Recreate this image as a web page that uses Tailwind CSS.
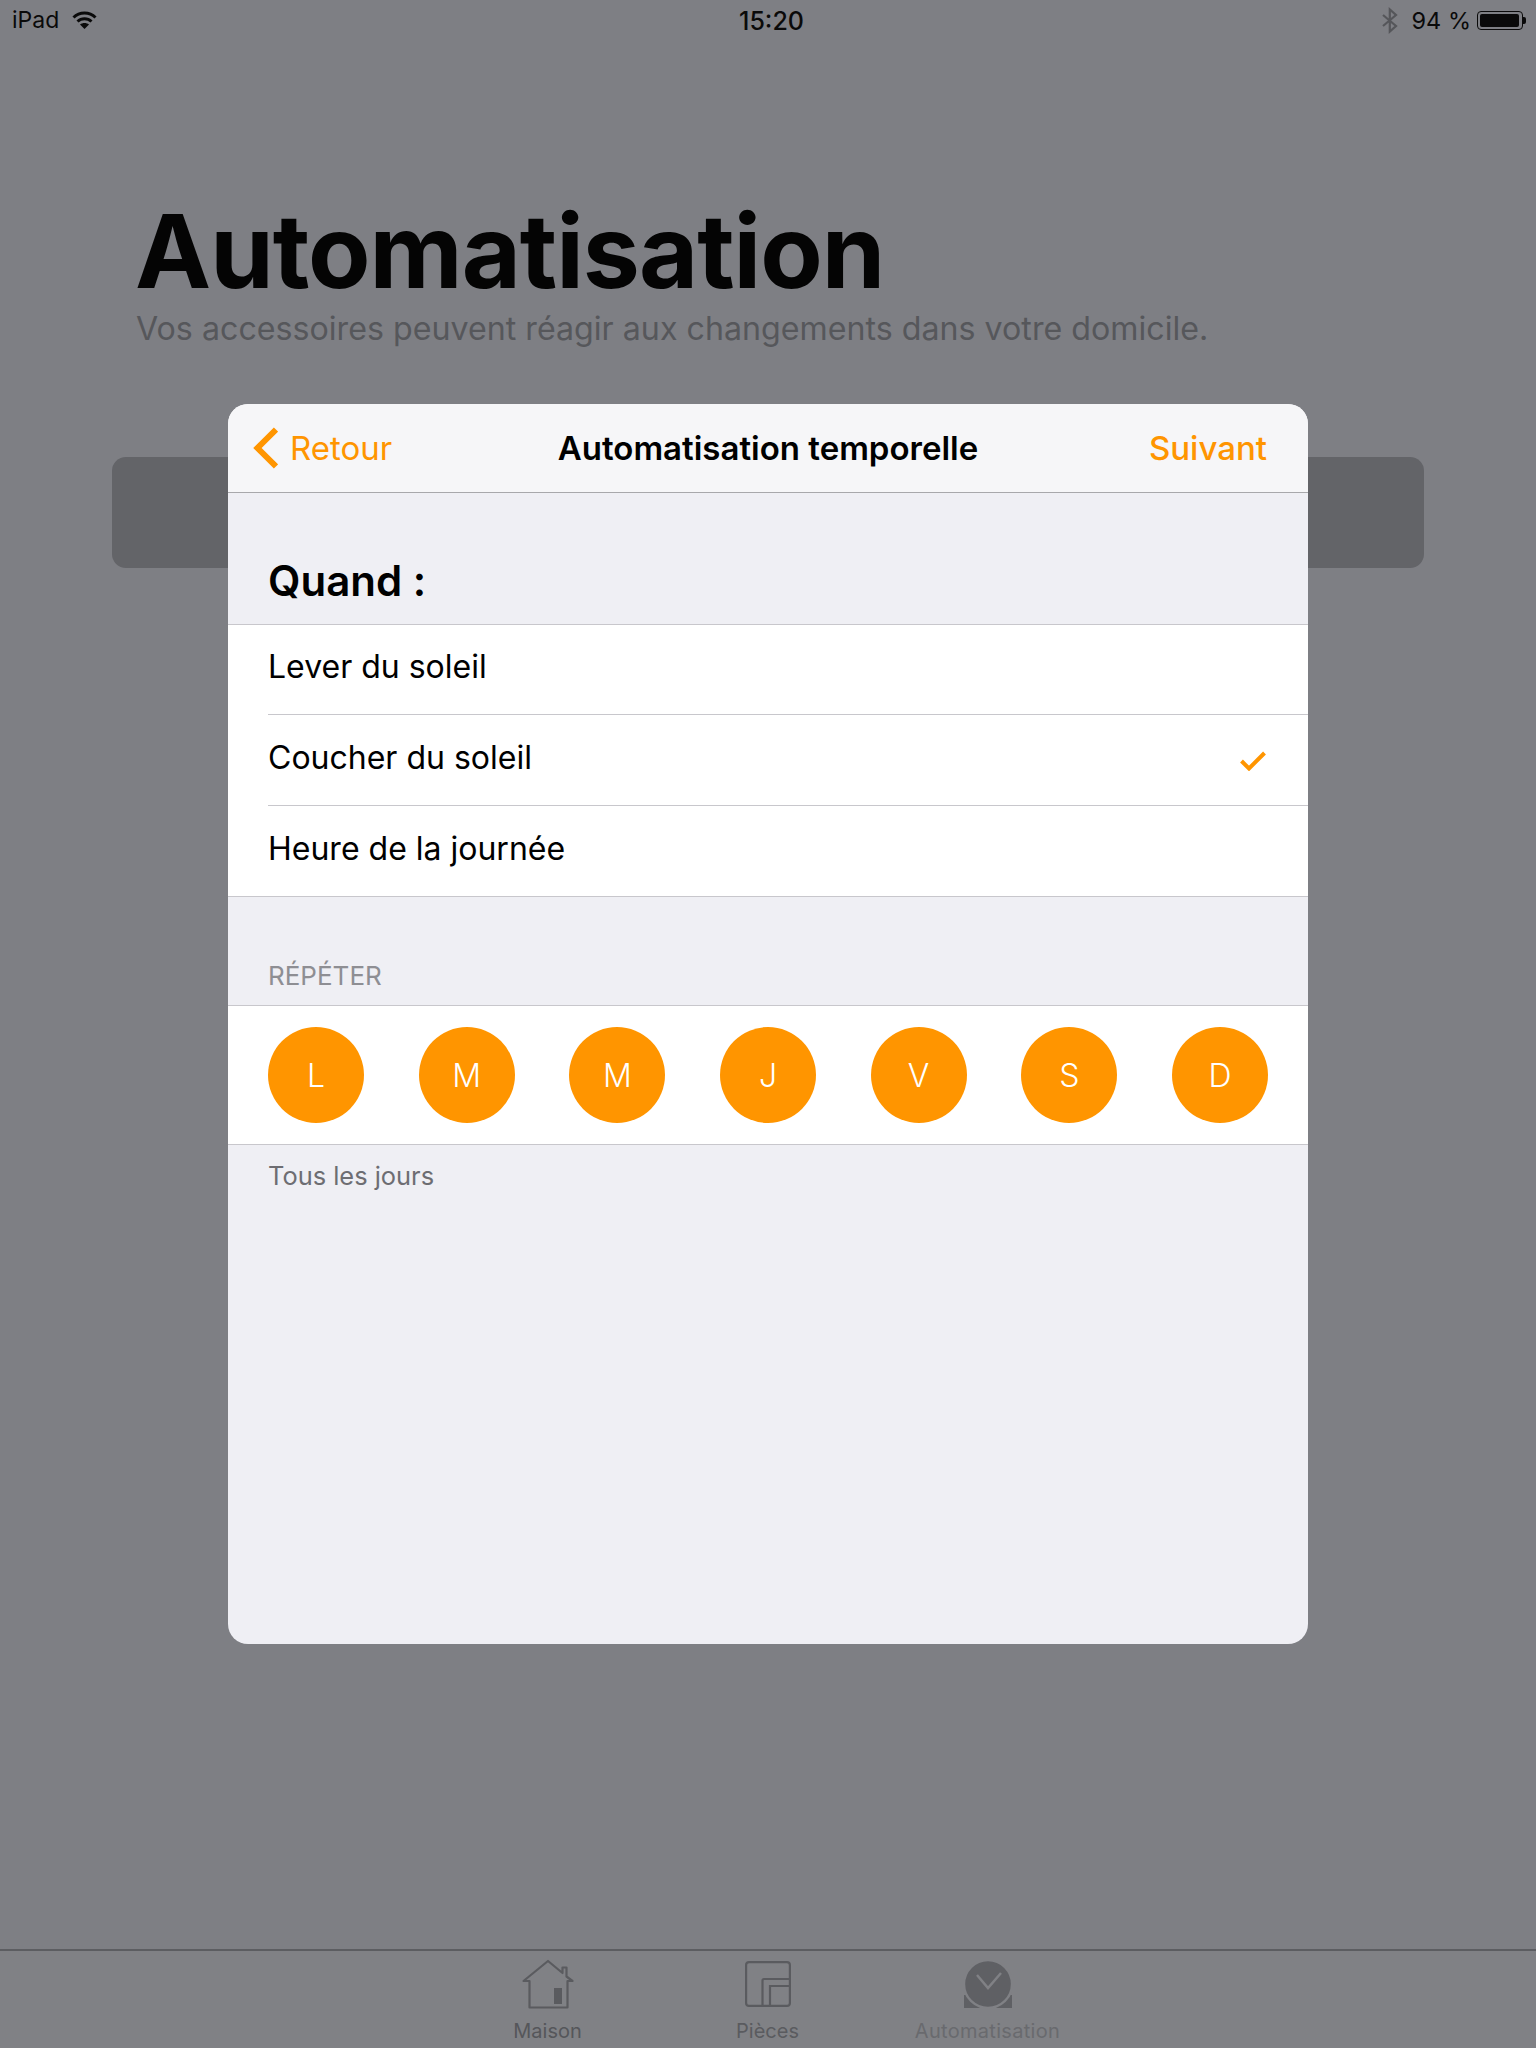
<!DOCTYPE html>
<html lang="fr">
<head>
    <meta charset="UTF-8">
    <title>Automatisation</title>
    <script src="https://cdn.jsdelivr.net/npm/@tailwindcss/browser@4"></script>
</head>
<body class="bg-[#7e7f84] font-['Inter',sans-serif]">
    <div class="relative w-[1536px] h-[2048px] overflow-hidden flex flex-col">

        <!-- Status bar -->
        <div class="h-10 pl-[12px] pr-[10px] grid grid-cols-3 items-center text-[24px] leading-none text-[#0a0a0a]">
            <div class="flex items-center gap-[13px]">
                <span class="text-[23px]">iPad</span>
                <svg width="25" height="20" viewBox="0 0 25 20" fill="none" stroke="#0a0a0a" stroke-width="3">
                    <path d="M1.5 7.5C7.5 1.5 17.5 1.5 23.5 7.5"/>
                    <path d="M5.5 11.5C9.5 7.8 15.5 7.8 19.5 11.5"/>
                    <path d="M8 14.5L12.5 19L17 14.5C14.500 12.500 10.500 12.500 8 14.5Z" fill="#0a0a0a" stroke="none"/>
                </svg>
            </div>
            <div class="text-center font-medium text-[25px] pt-[2px] pl-[5px]">15:20</div>
            <div class="flex items-center justify-end">
                <svg width="16" height="27" viewBox="0 0 16 26" fill="none" stroke="#55565a" stroke-width="2.200" class="mr-[14px]">
                    <path d="M1 7.500L14 18.500L7.800 24V2L14 7.500L1 18.500"/>
                </svg>
                <span class="text-[23.500px] mr-[6px] pt-[1px]">94 %</span>
                <div class="w-[46px] h-[19px] border border-[#0a0a0a] rounded-[4px] p-[2px]">
                    <div class="w-[39px] h-full bg-[#0a0a0a] rounded-[2px]"></div>
                </div>
                <div class="w-[3px] h-[7px] bg-[#0a0a0a] rounded-r-[2px]"></div>
            </div>
        </div>

        <!-- Page heading -->
        <div class="pl-[135px] pt-[153px]">
            <h1 class="text-[102px] leading-[116px] font-bold tracking-[-1px] text-[#040404]">Automatisation</h1>
            <p class="pl-[1px] text-[32.200px] leading-[40px] text-[#56575b]">Vos accessoires peuvent réagir aux changements dans votre domicile.</p>
        </div>

        <!-- Card behind the sheet -->
        <div class="mt-[108px] mx-[112px] h-[111px] bg-[#636468] rounded-[14px]"></div>

        <!-- Tab bar -->
        <div class="mt-auto h-[99px] border-t-2 border-[#5c5d61] bg-[#808185] flex justify-center text-[20px] leading-none">
            <div class="w-[220px] flex flex-col items-center ml-[-1px]">
                <svg width="54" height="50" viewBox="0 0 54 50" fill="none" stroke="#5a5b5f" stroke-width="2.200" class="mt-[8px]">
                    <path d="M8.500 22H2.500L27 2L41.500 14V8.500H45.500V17.500L51.500 22H46.500V48.500H8.500Z" stroke-linejoin="round"/>
                    <path d="M33 29H41V45H33Z" fill="#5a5b5f" stroke="none"/>
                </svg>
                <span class="text-[#55565a] mt-[12px]">Maison</span>
            </div>
            <div class="w-[220px] flex flex-col items-center">
                <svg width="46" height="46" viewBox="0 0 46 46" fill="none" stroke="#5a5b5f" stroke-width="2.200" class="mt-[10px] mb-[2px]">
                    <rect x="1.100" y="1.100" width="43.800" height="43.800" rx="3"/>
                    <path d="M17.500 45V19.500Q17.500 18 19 18H45M25 45V25H45"/>
                </svg>
                <span class="text-[#5a5b5f] mt-[12px]">Pièces</span>
            </div>
            <div class="w-[220px] flex flex-col items-center">
                <svg width="48" height="48" viewBox="0 0 48 48" class="mt-[9px] mb-[1px]">
                    <rect x="0" y="35" width="48" height="13" fill="#5f6064"/>
                    <circle cx="24" cy="24" r="24" fill="#5f6064" stroke="#808185" stroke-width="2.400"/>
                    <path d="M13 15L24 28L37 13" fill="none" stroke="#808185" stroke-width="2.500"/>
                </svg>
                <span class="text-[#696a6e] mt-[12px] tracking-[0.300px]">Automatisation</span>
            </div>
        </div>

        <!-- Modal sheet -->
        <div class="absolute left-[228px] top-[404px] w-[1080px] h-[1240px] bg-[#efeff4] rounded-[20px] overflow-hidden flex flex-col">
            <div class="h-[89px] shrink-0 bg-[#f6f6f8] border-b border-[#a8a8ab] grid grid-cols-[1fr_auto_1fr] items-center px-[25px] text-[33px] leading-[40px]">
                <div class="flex items-center gap-[12px] text-[#ff9500]">
                    <svg width="25" height="42" viewBox="0 0 25 42" fill="none" stroke="#ff9500" stroke-width="6">
                        <path d="M23 2.500L4.500 21L23 39.500"/>
                    </svg>
                    <span>Retour</span>
                </div>
                <div class="text-center font-semibold text-black whitespace-nowrap">Automatisation temporelle</div>
                <div class="text-right font-medium text-[#ff9500] pr-[16px]">Suivant</div>
            </div>

            <div class="h-[132px] shrink-0 border-b border-[#c8c7cc] flex items-end pl-[40px] pb-[18px]">
                <h2 class="text-[42px] leading-[50px] font-semibold text-black">Quand :</h2>
            </div>

            <div class="bg-white border-b border-[#c8c7cc] text-[32px] leading-[40px] text-black">
                <div class="h-[90px] ml-[40px] pb-[5px] border-b border-[#c8c7cc] flex items-center">Lever du soleil</div>
                <div class="h-[91px] ml-[40px] pb-[4px] border-b border-[#c8c7cc] flex items-center justify-between pr-[42px]">
                    <span>Coucher du soleil</span>
                    <svg width="26" height="20" viewBox="0 0 26 20" fill="none" stroke="#ff9500" stroke-width="4" class="mt-[6px]">
                        <path d="M1.500 10L9 17.500L24.500 2"/>
                    </svg>
                </div>
                <div class="h-[90px] ml-[40px] pb-[4px] flex items-center">Heure de la journée</div>
            </div>

            <div class="h-[108px] shrink-0 flex items-end pl-[40px] pb-[13px] text-[26px] leading-[32px] text-[#8e8e93]">RÉPÉTER</div>

            <div class="h-[140px] shrink-0 bg-white border-y border-[#c8c7cc] flex items-center justify-between px-[40px] text-[32px] font-[350] text-white">
                <div class="w-[96px] h-[96px] pt-[2px] rounded-full bg-[#ff9500] flex items-center justify-center">L</div>
                <div class="w-[96px] h-[96px] pt-[2px] rounded-full bg-[#ff9500] flex items-center justify-center">M</div>
                <div class="w-[96px] h-[96px] pt-[2px] rounded-full bg-[#ff9500] flex items-center justify-center">M</div>
                <div class="w-[96px] h-[96px] pt-[2px] rounded-full bg-[#ff9500] flex items-center justify-center">J</div>
                <div class="w-[96px] h-[96px] pt-[2px] rounded-full bg-[#ff9500] flex items-center justify-center">V</div>
                <div class="w-[96px] h-[96px] pt-[2px] rounded-full bg-[#ff9500] flex items-center justify-center">S</div>
                <div class="w-[96px] h-[96px] pt-[2px] rounded-full bg-[#ff9500] flex items-center justify-center">D</div>
            </div>

            <p class="pl-[40px] pt-[15px] text-[25.400px] leading-[32px] text-[#6d6d72]">Tous les jours</p>
        </div>
    </div>
</body>
</html>
